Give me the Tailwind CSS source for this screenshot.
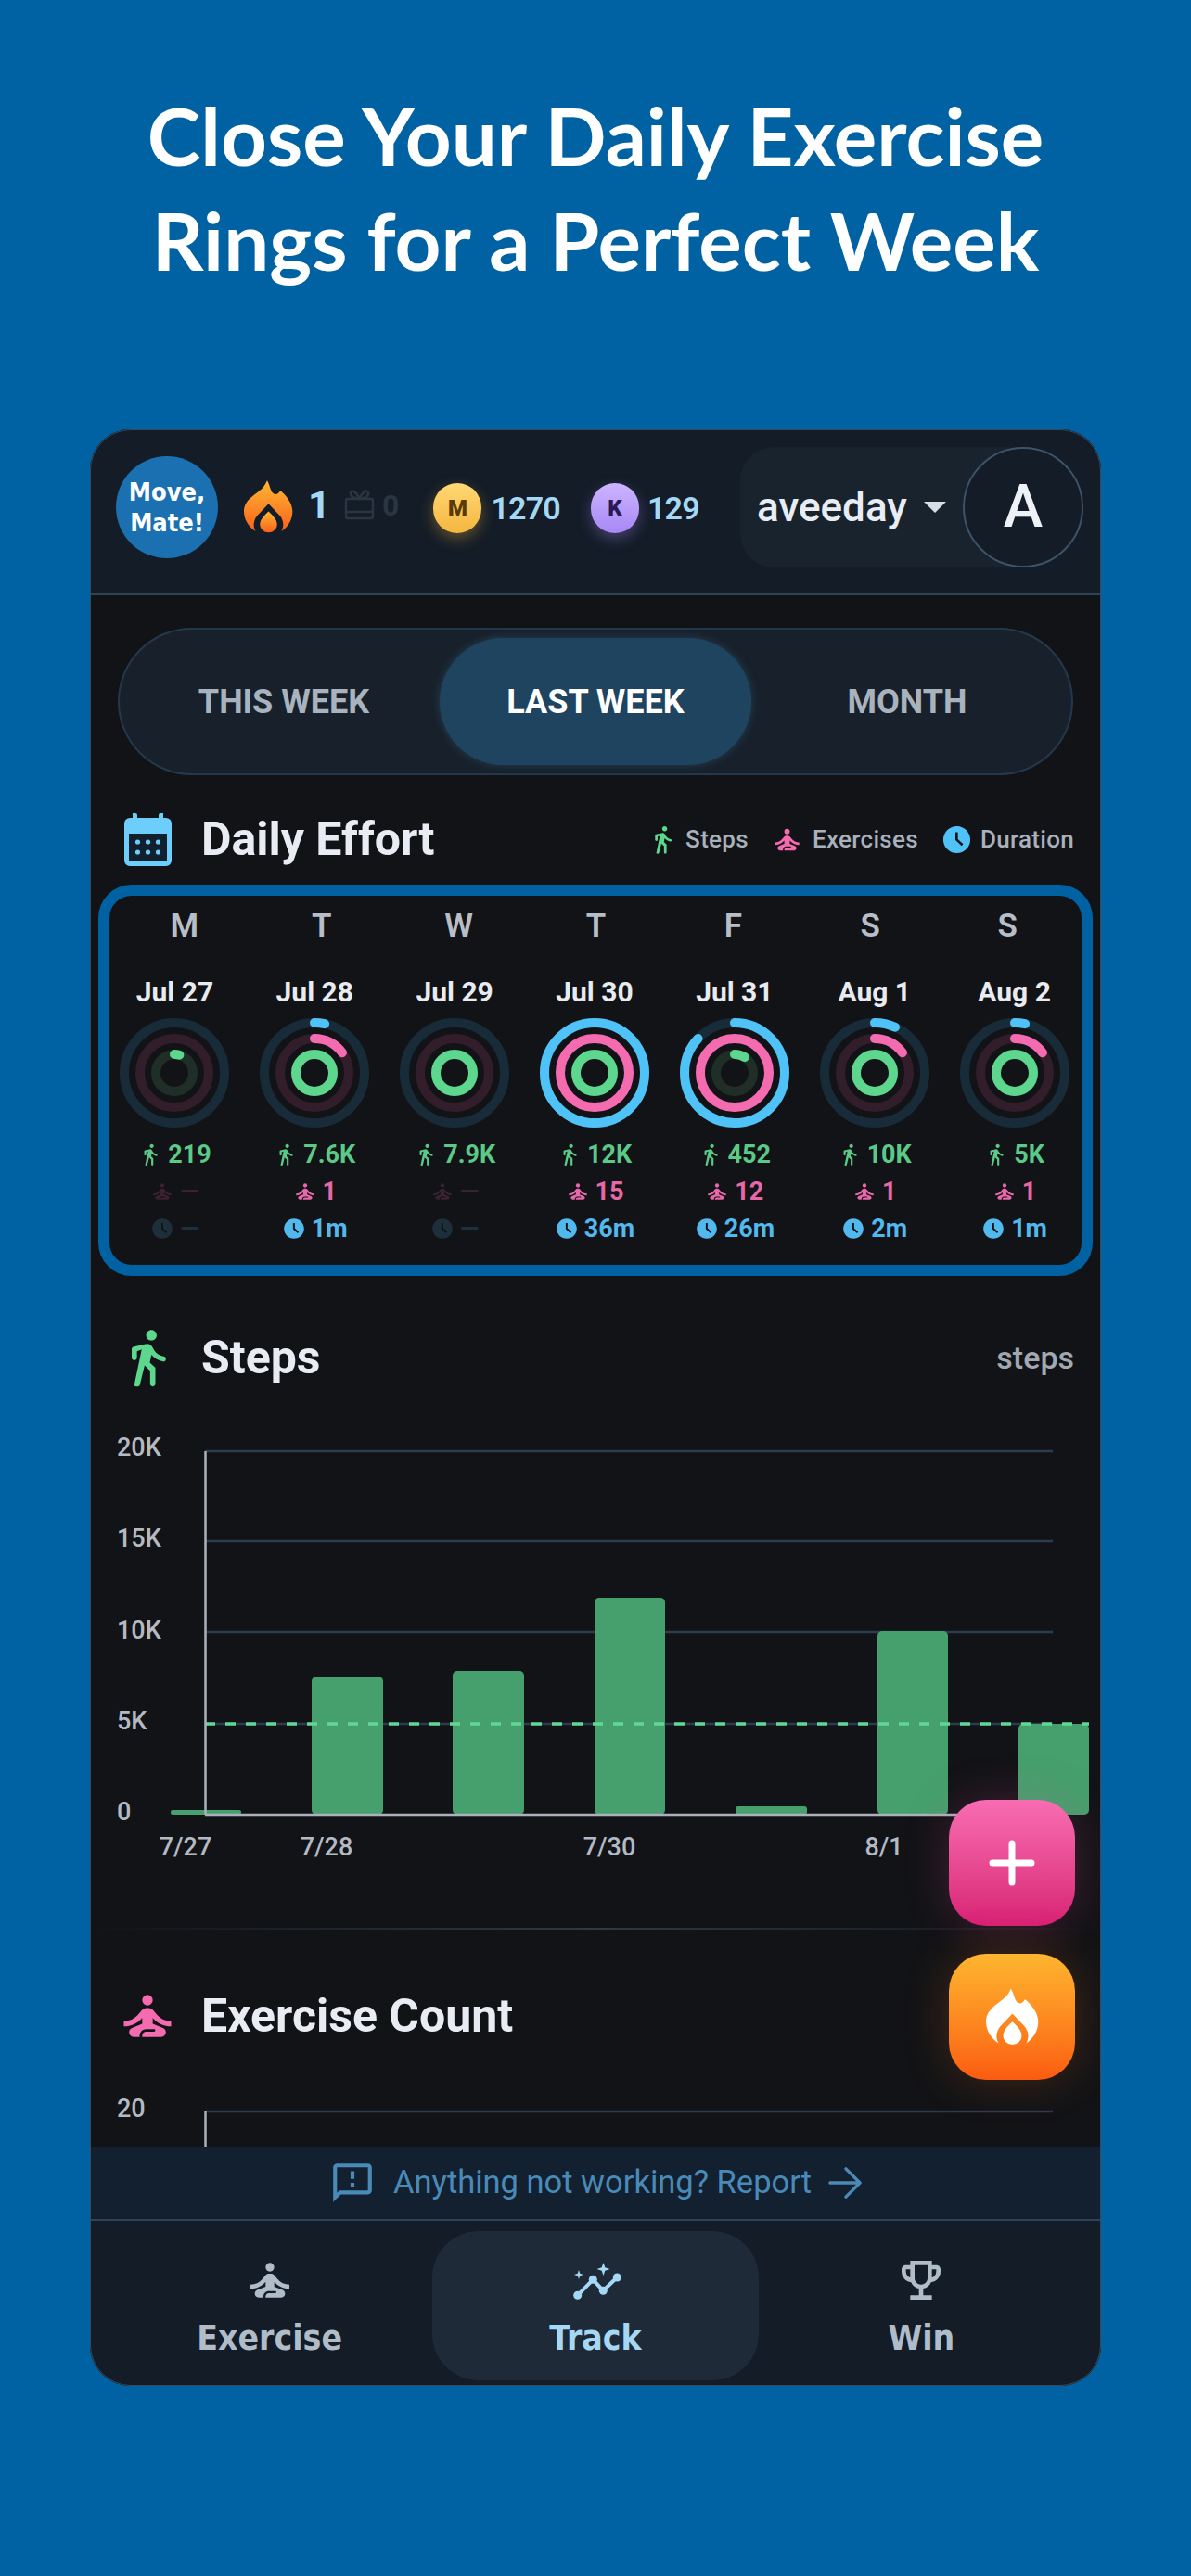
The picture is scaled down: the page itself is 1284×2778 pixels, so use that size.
<!DOCTYPE html>
<html lang="en">
<head>
    <meta charset="UTF-8">
    <title>Move, Mate!</title>
    <script src="https://cdn.jsdelivr.net/npm/@tailwindcss/browser@4"></script>
</head>
<body class="bg-[#0062a3] font-['Roboto',sans-serif]">
    <!-- shared icons -->
    <svg class="absolute w-0 h-0">
        <defs>
            <linearGradient id="flameGrad" x1="0" y1="0" x2="0" y2="1">
                <stop offset="0" stop-color="#ffb733"/>
                <stop offset="1" stop-color="#f9621a"/>
            </linearGradient>
        </defs>
        <symbol id="flame" viewBox="0 0 160 170">
            <path d="M38 165C14 150 0 125 0 100C0 60 40 45 62 22C68 15 72 8 75 0C82 8 84 25 92 38C100 48 112 45 118 32C140 50 158 75 158 100C158 125 145 150 122 165C132 145 128 130 118 115L80 75L42 115C32 130 28 145 38 165Z"/>
            <path d="M80 100C92 112 108 125 108 143A28 26 0 0 1 52 143C52 125 68 112 80 100Z"/>
        </symbol>
        <symbol id="walk" viewBox="0 0 24 24">
            <path d="M13.5 5.5c1.1 0 2-.9 2-2s-.9-2-2-2-2 .9-2 2 .9 2 2 2zM9.8 8.9L7 22.2c-.1.5.3.8.7.8h.6c.4 0 .7-.2.8-.6l1.8-7.4 2.1 2v5c0 .5.4 1 1 1s1-.5 1-1v-6.1l-2.1-2 .6-3c1.1 1.3 2.7 2.3 4.5 2.6.5.1 1-.3 1-.9 0-.5-.3-.9-.8-1-1.5-.3-2.7-1.1-3.5-2.2l-1-1.6c-.4-.6-1-1-1.7-1-.3 0-.5.1-.8.1L6.6 7.9c-.4.2-.6.5-.6.9V12c0 .6.4 1 1 1s1-.4 1-1V9.6l1.8-.7z"/>
        </symbol>
        <symbol id="meditate" viewBox="0 0 24 24">
            <circle cx="12" cy="6" r="2"/>
            <path d="M21 16v-2c-2.24 0-4.16-.96-5.6-2.68l-1.34-1.6c-.38-.46-.94-.72-1.53-.72h-1.05c-.59 0-1.15.26-1.53.72l-1.34 1.6C7.16 13.04 5.24 14 3 14v2c2.77 0 5.19-1.17 7-3.25V15l-3.88 1.55c-.67.27-1.12.93-1.12 1.66C5 19.2 5.8 20 6.79 20H9v-.5c0-1.38 1.12-2.5 2.5-2.5h3c.28 0 .5.22.5.5s-.22.5-.5.5h-3c-.83 0-1.5.67-1.5 1.5v.5h7.21c.99 0 1.79-.8 1.79-1.79 0-.73-.45-1.39-1.12-1.66L14 15v-2.25c1.81 2.08 4.23 3.25 7 3.25z"/>
        </symbol>
        <symbol id="clock" viewBox="0 0 24 24">
            <path d="M12 2C6.5 2 2 6.5 2 12s4.5 10 10 10 10-4.5 10-10S17.5 2 12 2zm3.6 14.6L11 12.4V6.500h1.800v5.100l4 3.600-1.200 1.400z"/>
        </symbol>
    </svg>

    <div class="w-[1284px] h-[2778px] overflow-hidden">
        <h1 class="pt-[89px] text-center text-white text-[87px] leading-[113px] font-bold font-['Lato',sans-serif]">
            Close Your Daily Exercise<br>Rings for a Perfect Week
        </h1>

        <!-- App card -->
        <div class="relative mt-[148px] mx-auto w-[1090px] h-[2110px] rounded-[44px] overflow-hidden bg-[#121316] flex flex-col outline outline-1 -outline-offset-1 outline-[#3a4a5c]">
            <!-- Header -->
            <header class="h-[179px] shrink-0 bg-[#131c27] border-b-2 border-[#2f4459] flex items-start pl-[28px] pr-[19px]">
                <div class="mt-[29px] w-[110px] h-[110px] shrink-0 rounded-full bg-[#1a70b0] flex items-center justify-center text-center text-white text-[27px] leading-[33px] font-bold font-['DejaVu_Sans_Condensed',sans-serif]">
                    Move,<br>Mate!
                </div>
                <svg class="mt-[55px] ml-[28px] w-[53px] h-[57px] shrink-0" fill="url(#flameGrad)"><use href="#flame"/></svg>
                <span class="mt-[58px] ml-[16px] text-[42px] leading-[48px] font-bold text-[#a5d8f5]">1</span>
                <svg class="mt-[64px] ml-[15px] w-[33px] h-[34px] shrink-0" viewBox="0 0 33 34" fill="none" stroke="#2a3542" stroke-width="2.500">
                    <rect x="2" y="11" width="29" height="21" rx="2"/>
                    <path d="M2 25h29M16.500 11C14 4 8 0 7 4s4 7 9.500 7C22 11 27 8 26 4s-7 0-9.500 7"/>
                </svg>
                <span class="mt-[62px] ml-[8px] text-[32px] leading-[40px] font-bold text-[#2a3542]">0</span>
                <div class="mt-[58px] ml-[37px] w-[52px] h-[54px] shrink-0 rounded-full bg-linear-to-b from-[#ffd873] to-[#f4b63f] shadow-[0_6px_16px_rgba(245,180,60,0.35)] flex items-center justify-center text-[24px] font-black text-[#5c3a06]">M</div>
                <span class="mt-[63px] ml-[10px] text-[34px] leading-[44px] font-semibold tracking-[-0.8px] text-[#a5d8f5]">1270</span>
                <div class="mt-[58px] ml-[33px] w-[52px] h-[54px] shrink-0 rounded-full bg-linear-to-b from-[#cdb4ff] to-[#a888f5] shadow-[0_6px_16px_rgba(168,136,245,0.35)] flex items-center justify-center text-[24px] font-black text-[#2c1a58]">K</div>
                <span class="mt-[63px] ml-[9px] text-[34px] leading-[44px] font-semibold tracking-[-0.8px] text-[#a5d8f5]">129</span>
                <div class="mt-[19px] ml-auto w-[370px] h-[130px] rounded-l-[36px] rounded-r-[65px] bg-[#18232d] flex items-center pl-[18px]">
                    <span class="text-[44px] leading-[50px] font-medium text-[#e8edf3]">aveeday</span>
                    <span class="ml-[18px] w-0 h-0 border-x-[12px] border-x-transparent border-t-[12px] border-t-[#d5dde6]"></span>
                    <div class="ml-auto w-[130px] h-[130px] rounded-full bg-[#131c27] border-2 border-[#3d5368] flex items-center justify-center text-[64px] font-medium text-[#eef2f6]">A</div>
                </div>
            </header>

            <!-- Scrolling body -->
            <main class="h-[1673px] shrink-0 overflow-hidden">
                <!-- Period tabs -->
                <div class="mt-[35px] mx-[30px] h-[159px] rounded-full bg-[#18212b] border-2 border-[#24384c] p-[9px] grid grid-cols-3 text-[36px] font-bold text-[#a9b3bd]">
                    <div class="flex items-center justify-center">THIS WEEK</div>
                    <div class="flex items-center justify-center rounded-full bg-[#1f4460] text-white shadow-[0_0_10px_rgba(60,120,170,0.35)]">LAST WEEK</div>
                    <div class="flex items-center justify-center">MONTH</div>
                </div>

                <!-- Daily effort title -->
                <div class="mt-[39px] h-[60px] pl-[28px] pr-[29px] flex items-center">
                    <div class="w-[68px] h-[60px] flex items-center justify-center">
                        <svg class="w-[51px] h-[57px]" viewBox="0 0 51 57">
                            <path d="M9 0h3a2 2 0 0 1 2 2v3h23V2a2 2 0 0 1 2-2h3v5h3a6 6 0 0 1 6 6v40a6 6 0 0 1-6 6H6a6 6 0 0 1-6-6V11a6 6 0 0 1 6-6h3z" fill="#6dcdfb"/>
                            <rect x="5" y="22" width="41" height="29" fill="#10202f"/>
                            <g fill="#6dcdfb">
                                <circle cx="14.500" cy="31" r="2.600"/><circle cx="25.500" cy="31" r="2.600"/><circle cx="36.500" cy="31" r="2.600"/>
                                <circle cx="14.500" cy="42" r="2.600"/><circle cx="25.500" cy="42" r="2.600"/><circle cx="36.500" cy="42" r="2.600"/>
                            </g>
                        </svg>
                    </div>
                    <h2 class="ml-[24px] text-[50px] font-bold text-[#e9ecf3]">Daily Effort</h2>
                    <div class="ml-auto flex items-center text-[26px] font-medium tracking-[0.3px] text-[#a9b1bd]">
                        <svg class="w-[33px] h-[33px] fill-[#5dd68e]"><use href="#walk"/></svg>
                        <span class="ml-[8px]">Steps</span>
                        <svg class="ml-[24px] w-[35px] h-[35px] fill-[#f56bb0]"><use href="#meditate"/></svg>
                        <span class="ml-[10px]">Exercises</span>
                        <svg class="ml-[24px] w-[35px] h-[35px] fill-[#4fc3f7]"><use href="#clock"/></svg>
                        <span class="ml-[8px]">Duration</span>
                    </div>
                </div>

                <!-- Week rings -->
                <div class="mt-[19px] ml-[9px] w-[1072px] h-[422px] rounded-[36px] border-[12px] border-[#0062a3]">
                    <div class="mt-[16px] ml-[7px] w-[1035px] grid grid-cols-7 text-center text-[35px] leading-[34px] font-semibold text-[#b7bec8]">
                        <span>M</span><span>T</span><span>W</span><span>T</span><span>F</span><span>S</span><span>S</span>
                    </div>
                    <div id="week" class="mt-[37px] ml-[-5px] w-[1056px] grid grid-cols-7"></div>
                </div>

                <!-- Steps -->
                <div class="mt-[57px] h-[62px] pl-[28px] pr-[29px] flex items-center">
                    <svg class="w-[68px] h-[68px] fill-[#5dd68e]"><use href="#walk"/></svg>
                    <h2 class="ml-[24px] text-[50px] font-bold text-[#e9ecf3]">Steps</h2>
                    <span class="ml-auto text-[34px] font-medium text-[#a0a8b2]">steps</span>
                </div>

                <svg class="mt-[35px] block w-[1090px] h-[500px]" viewBox="97 1530 1090 500" font-size="27" font-weight="500" fill="#b4bac4">
                    <g stroke="#2d3b4e" stroke-width="2.500">
                        <path d="M221 1565H1135M221 1662H1135M221 1760H1135M221 1859H1135"/>
                    </g>
                    <text x="126" y="1570">20K</text>
                    <text x="126" y="1668">15K</text>
                    <text x="126" y="1767">10K</text>
                    <text x="126" y="1865">5K</text>
                    <text x="126" y="1963">0</text>
                    <g fill="#45a06d">
                        <rect x="184" y="1952" width="76" height="5" rx="2"/>
                        <rect x="336" y="1808" width="77" height="149" rx="5"/>
                        <rect x="488" y="1802" width="77" height="155" rx="5"/>
                        <rect x="641" y="1723" width="76" height="234" rx="5"/>
                        <rect x="793" y="1948" width="77" height="9" rx="3"/>
                        <rect x="946" y="1759" width="76" height="198" rx="5"/>
                        <rect x="1098" y="1859" width="76" height="98" rx="5"/>
                    </g>
                    <path d="M221 1859H1174" stroke="#62d695" stroke-width="3.500" stroke-dasharray="11 11"/>
                    <path d="M221.500 1565V1957M221 1957H1135" stroke="#aab1bc" stroke-width="2.500" fill="none"/>
                    <text x="200" y="2001" text-anchor="middle">7/27</text>
                    <text x="352" y="2001" text-anchor="middle">7/28</text>
                    <text x="657" y="2001" text-anchor="middle">7/30</text>
                    <text x="953" y="2001" text-anchor="middle">8/1</text>
                </svg>

                <div class="mt-[49px] h-[2px] bg-linear-to-r from-transparent via-[#2c3a4a] to-transparent"></div>

                <!-- Exercise count -->
                <div class="mt-[63px] h-[60px] pl-[28px] flex items-center">
                    <svg class="w-[68px] h-[68px] fill-[#f56bb0]"><use href="#meditate"/></svg>
                    <h2 class="ml-[24px] text-[50px] font-bold text-[#e9ecf3]">Exercise Count</h2>
                </div>
                <svg class="mt-[50px] block w-[1090px] h-[61px]" viewBox="97 2254 1090 61" font-size="27" font-weight="500" fill="#b4bac4">
                    <path d="M221 2277H1135" stroke="#2d3b4e" stroke-width="2.500"/>
                    <path d="M221.500 2277V2315" stroke="#aab1bc" stroke-width="2.500"/>
                    <text x="126" y="2283">20</text>
                </svg>
            </main>

            <!-- Report bar -->
            <div class="h-[78px] shrink-0 bg-[#132030] flex items-center justify-center text-[34.5px] text-[#4a8ab8]">
                <svg class="w-[50px] h-[50px] fill-[#4a8ab8]" viewBox="0 0 24 24"><path d="M20 2H4c-1.100 0-2 .9-2 2v18l4-4h14c1.100 0 2-.9 2-2V4c0-1.100-.9-2-2-2zm0 14H5.170L4 17.170V4h16v12zM11 12h2v2h-2zm0-6h2v4h-2z"/></svg>
                <span class="ml-[19px]">Anything not working? Report</span>
                <svg class="ml-[18px] w-[36px] h-[38px]" viewBox="0 0 38 38" fill="none" stroke="#4a8ab8" stroke-width="3.500" stroke-linecap="round" stroke-linejoin="round"><path d="M2 19h33M20 3l16 16-16 16"/></svg>
            </div>

            <!-- Bottom nav -->
            <nav class="flex-1 bg-[#131c27] border-t-2 border-[#2f4459] grid grid-cols-3 px-[18px] pt-[11px] pb-[6px] font-['DejaVu_Sans_Condensed',sans-serif] font-bold text-[37px] leading-[44px] text-[#b0bcc8]">
                <a class="flex flex-col items-center pt-[25px]">
                    <svg class="w-[56px] h-[56px] fill-[#b0bcc8]"><use href="#meditate"/></svg>
                    <span class="mt-[13px]">Exercise</span>
                </a>
                <a class="flex flex-col items-center pt-[25px] rounded-[50px] bg-[#1e2a37] text-[#a5d8f5]">
                    <svg class="w-[84px] h-[56px]" viewBox="18 10 84 56" fill="#a5d8f5">
                        <path d="M40.700 54.300 57.300 37.300 68.300 49.300 83.300 35" fill="none" stroke="#a5d8f5" stroke-width="4" stroke-linecap="round" stroke-linejoin="round"/>
                        <circle cx="40.700" cy="54.300" r="4.500"/><circle cx="57.300" cy="37.300" r="4.500"/><circle cx="68.300" cy="49.300" r="4.500"/><circle cx="83.300" cy="35" r="4.500"/>
                        <path d="M68.500 19 70.300 24.200 75.500 26 70.300 27.800 68.500 33 66.700 27.800 61.500 26 66.700 24.200Z"/>
                        <path d="M42 27 43.200 30.800 47 32 43.200 33.200 42 37 40.800 33.200 37 32 40.800 30.800Z"/>
                    </svg>
                    <span class="mt-[13px]">Track</span>
                </a>
                <a class="flex flex-col items-center pt-[25px]">
                    <svg class="w-[56px] h-[56px] fill-[#b0bcc8]" viewBox="0 0 24 24"><path d="M19 5h-2V3H7v2H5c-1.100 0-2 .9-2 2v1c0 2.550 1.920 4.630 4.390 4.940.63 1.500 1.980 2.630 3.610 2.960V19H7v2h10v-2h-4v-3.100c1.630-.33 2.980-1.460 3.610-2.960C19.080 12.630 21 10.550 21 8V7c0-1.100-.9-2-2-2zM5 8V7h2v3.820C5.840 10.400 5 9.300 5 8zm7 6c-1.650 0-3-1.350-3-3V5h6v6c0 1.650-1.350 3-3 3zm7-6c0 1.300-.84 2.400-2 2.820V7h2v1z"/></svg>
                    <span class="mt-[13px]">Win</span>
                </a>
            </nav>

            <!-- Floating buttons -->
            <button class="absolute right-[28px] top-[1478px] w-[136px] h-[136px] rounded-[40px] bg-linear-to-b from-[#f86cb2] to-[#d81f74] shadow-[0_0_50px_rgba(236,72,153,0.22)] flex items-center justify-center">
                <svg class="w-[50px] h-[50px]" viewBox="0 0 50 50" stroke="#fff" stroke-width="7" stroke-linecap="round"><path d="M25 4V46M4 25H46"/></svg>
            </button>
            <button class="absolute right-[28px] top-[1644px] w-[136px] h-[136px] rounded-[40px] bg-linear-to-b from-[#fdb52f] to-[#fa5b10] shadow-[0_0_50px_rgba(249,115,22,0.22)] flex items-center justify-center">
                <svg class="w-[57px] h-[62px] fill-white"><use href="#flame"/></svg>
            </button>
        </div>
    </div>

    <script>
        // label, steps, exercises, duration, ring progress in percent (blue, pink, green)
        const days = [
            { date: 'Jul 27', steps: '219', ex: null, dur: null, rings: [0, 0, 4.4] },
            { date: 'Jul 28', steps: '7.6K', ex: '1', dur: '1m', rings: [3.3, 15, 100] },
            { date: 'Jul 29', steps: '7.9K', ex: null, dur: null, rings: [0, 0, 100] },
            { date: 'Jul 30', steps: '12K', ex: '15', dur: '36m', rings: [100, 100, 100] },
            { date: 'Jul 31', steps: '452', ex: '12', dur: '26m', rings: [87, 100, 9] },
            { date: 'Aug 1', steps: '10K', ex: '1', dur: '2m', rings: [6.7, 15, 100] },
            { date: 'Aug 2', steps: '5K', ex: '1', dur: '1m', rings: [3.3, 15, 100] },
        ];

        function ring(r, track, color, pct) {
            const arc = pct > 0
                ? `<circle cx="60" cy="60" r="${r}" fill="none" stroke="${color}" stroke-width="10" stroke-linecap="round" pathLength="100" stroke-dasharray="${pct} 100" transform="rotate(-90 60 60)"/>`
                : '';
            return `<circle cx="60" cy="60" r="${r}" fill="none" stroke="${track}" stroke-width="10"/>${arc}`;
        }

        function stat(icon, value, rowClass) {
            return `<div class="h-[40px] flex items-center justify-center gap-[6px] ${rowClass}">
                <svg class="w-[26px] h-[26px] fill-current"><use href="#${icon}"/></svg><span>${value ?? '—'}</span></div>`;
        }

        document.getElementById('week').innerHTML = days.map(d => `
            <div class="flex flex-col items-center">
                <div class="h-[34px] leading-[34px] text-[30px] font-bold text-[#e8ebf0]">${d.date}</div>
                <svg class="mt-[10px] w-[120px] h-[120px]" viewBox="0 0 120 120">
                    ${ring(54, '#182b38', '#4fc3f7', d.rings[0])}
                    ${ring(37, '#321d2b', '#f56bb0', d.rings[1])}
                    ${ring(20, '#1f2e26', '#5dd68e', d.rings[2])}
                </svg>
                <div class="mt-[8px] w-full text-[27px] font-bold leading-[40px]">
                    ${stat('walk', d.steps, 'text-[#5bc987]')}
                    ${stat('meditate', d.ex, d.ex ? 'text-[#e668a8]' : 'text-[#3b2231]')}
                    ${stat('clock', d.dur, d.dur ? 'text-[#52b9ee]' : 'text-[#1e2f3c]')}
                </div>
            </div>`).join('');
    </script>
</body>
</html>
